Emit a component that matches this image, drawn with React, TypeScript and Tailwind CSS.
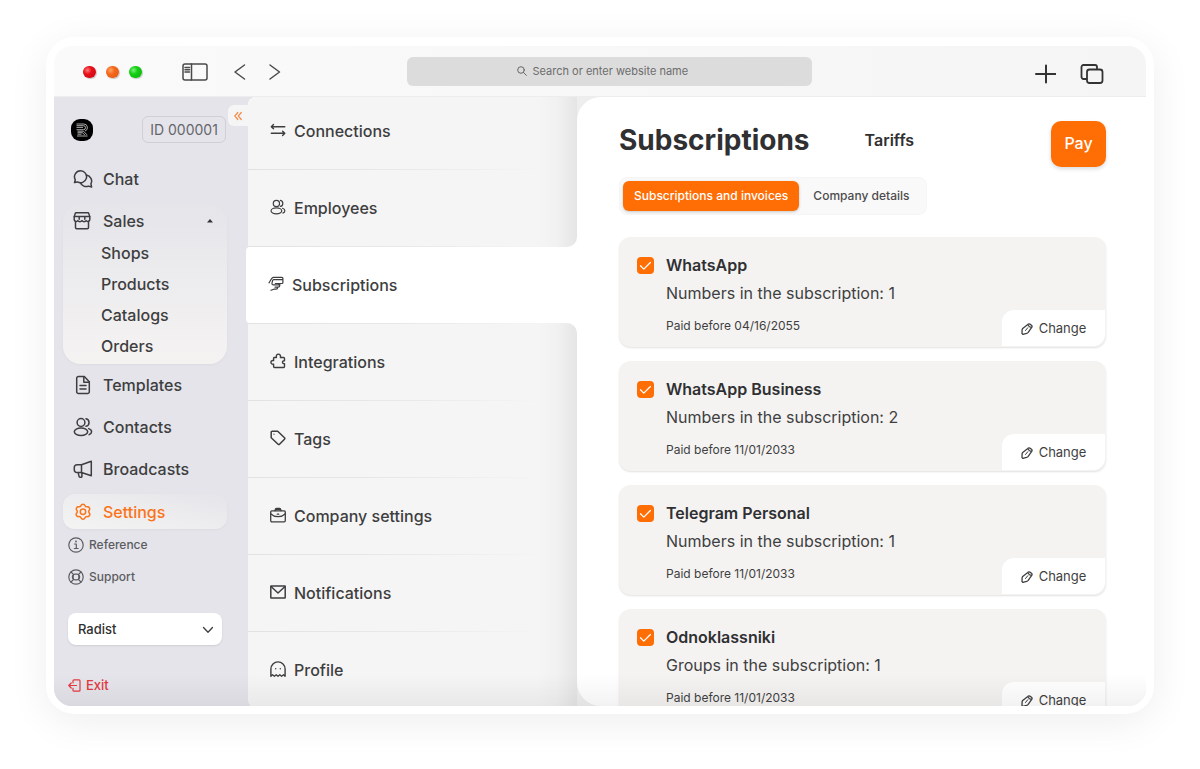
import type { ReactNode } from "react";

function Svg({ children, className, box = "0 0 20 20", w = "1.5" }: { children: ReactNode; className: string; box?: string; w?: string }) {
  return (
    <svg
      viewBox={box}
      className={className}
      fill="none"
      stroke="currentColor"
      strokeWidth={w}
      strokeLinecap="round"
      strokeLinejoin="round"
      aria-hidden="true"
    >
      {children}
    </svg>
  );
}

const ICON = "h-5 w-5 shrink-0";
const SMALL = "h-4 w-4 shrink-0 mb-0.5";

const Chat = () => (
  <Svg className={ICON}>
    <path d="M7.5 1.8a6 6 0 0 0-5.200 9L1.500 13.600l2.900-.7a6 6 0 1 0 3.100-11.100Z" />
    <path d="M7.500 13.900a6 6 0 0 0 7.900 3.200l3.200.9-.7-3.100a6 6 0 0 0-4.500-8.800" />
  </Svg>
);
const Store = () => (
  <Svg className={ICON} w="1.5">
    <path d="M3.200 1.800h11.600a1 1 0 0 1 1 .8l1 3.200v2.600a2 2 0 0 1-3.600 1.200 2.600 2.600 0 0 1-4.200 0 2.600 2.600 0 0 1-4.200 0A2 2 0 0 1 1.200 8.400V5.800l1-3.200a1 1 0 0 1 1-.8Z" />
    <path d="M1.300 5.600h15.400M6.200 5.800v2.500M11.800 5.800v2.500M2.500 10.500v6a1.200 1.200 0 0 0 1.200 1.200h10.600a1.200 1.200 0 0 0 1.200-1.200v-6" />
  </Svg>
);
const Doc = () => (
  <Svg className={ICON}>
    <path d="M5.500 1.500h5.800l5 5.200v10a1.800 1.800 0 0 1-1.800 1.800h-9a1.800 1.800 0 0 1-1.800-1.800V3.300a1.800 1.800 0 0 1 1.800-1.800Z" />
    <path d="M10.800 1.800v5.400H16M7 10.500h6M7 14h6" />
  </Svg>
);
const People = ({ className }: { className: string }) => (
  <Svg className={className} w="1.5">
    <circle cx="8" cy="5.500" r="3.900" />
    <ellipse cx="8" cy="14.800" rx="6.700" ry="3.700" />
    <path d="M13 1.700a3.900 3.900 0 0 1 0 7.600M15.700 11.600c1.800.6 2.900 1.700 2.900 3.100 0 1.300-1 2.300-2.500 2.900" />
  </Svg>
);
const Horn = () => (
  <Svg className={ICON}>
    <path d="M8.500 5.800 18.300 2.200v14.600L8.500 13.500H4a2.700 2.700 0 0 1-2.700-2.700V8.500A2.700 2.700 0 0 1 4 5.800h4.500ZM8.500 5.800v7.700M5.200 13.700l.9 3.900a.8.800 0 0 0 .8.600h1.200a.8.800 0 0 0 .8-.8v-3.600" />
  </Svg>
);
const Gear = () => (
  <Svg className={ICON}>
    <path d="M8.100 2.700c.6-1.600 3.200-1.600 3.800 0 .4 1 1.400 1.600 2.500 1.400 1.700-.3 3 1.900 1.900 3.300-.7.900-.7 2 0 2.900 1.300 1.500 0 3.900-1.900 3.600-1.100-.2-2.100.4-2.500 1.400-.6 1.700-3.200 1.700-3.800 0-.4-1-1.400-1.600-2.500-1.400-1.900.3-3.200-2.100-1.900-3.600.7-.9.700-2 0-2.900-1.100-1.400.2-3.600 1.900-3.300 1.100.2 2.100-.4 2.500-1.400Z" transform="translate(0 .7)" />
    <circle cx="10" cy="9.800" r="2.700" />
  </Svg>
);
const Info = () => (
  <Svg className="h-4 w-4 shrink-0" box="0 0 16 16" w="1.200">
    <circle cx="8" cy="8" r="7.200" />
    <path d="M6.500 7h1.800v4.500M6.300 11.500h3.800" />
    <circle cx="8" cy="4.500" r=".9" fill="currentColor" stroke="none" />
  </Svg>
);
const Buoy = () => (
  <Svg className="h-4 w-4 shrink-0" box="0 0 16 16" w="1.200">
    <circle cx="8" cy="8" r="7.200" />
    <rect x="5.200" y="5.200" width="5.600" height="5.600" rx="1.800" />
    <path d="m3 3 2.700 2.700M13 3l-2.700 2.700M3 13l2.700-2.700M13 13l-2.700-2.700M5.400 5.800C4 7 4 9 5.400 10.200M10.600 5.800C12 7 12 9 10.600 10.200" />
  </Svg>
);
const Exit = () => (
  <Svg className="h-[13px] w-[13px] shrink-0" box="0 0 13 13" w="1.200">
    <path d="M5 3.800V1.800a1 1 0 0 1 1-1h5a1 1 0 0 1 1 1v9.400a1 1 0 0 1-1 1H6a1 1 0 0 1-1-1V9.300M8.500 6.500H.8M3.200 4 .8 6.500 3.200 9" />
  </Svg>
);
const Arrows = () => (
  <Svg className={SMALL} box="0 0 16 16" w="1.400">
    <path d="M14.800 4.800H1.500M3.500 2.600 1.300 4.800l2.200 2M1.300 11.300h13.300M12.600 9.300l2.200 2-2.200 2.200" />
  </Svg>
);
const CardHand = () => (
  <Svg className={SMALL} box="0 0 16 16" w="1.200">
    <path d="M1 6.800C2.200 5 3 3.200 4 2.100c.5-.6 1-.8 1.700-.8h8.200a1 1 0 0 1 1 1v4.200a1 1 0 0 1-1 1H9M5.500 3.700h9.200M4.700 4.200 4 7.200c-.2 1 .4 1.700 1.300 1.700h4.900c1 0 1-1.400 0-1.400H7.300M11.800 7.700v1.700c0 1.100-.8 1.700-1.900 1.700H7M9.700 11.300c0 1.200-.7 1.900-1.700 1.900H5.800L3 14.300" />
  </Svg>
);
const Puzzle = () => (
  <Svg className={SMALL} box="0 0 16 16" w="1.400">
    <path d="M4 4.500h2.400c-.5-1.600.4-3.400 2-3.400s2.500 1.800 2 3.400h3.200a.9.900 0 0 1 .9.900v2.400c-2.600-.5-2.800 3.200 0 2.800v3a.9.900 0 0 1-.9.900H4.500a.9.900 0 0 1-.9-.9v-2.400C-.1 11.600.2 6.800 3.600 7.600V4.900Z" />
  </Svg>
);
const Tag = () => (
  <Svg className={SMALL} box="0 0 16 16" w="1.500">
    <path d="M1.200 2.300a1 1 0 0 1 1-1h5.500l6.800 6.500a1 1 0 0 1 0 1.400l-5 5a1 1 0 0 1-1.400 0L1.200 7.700V2.300Z" />
    <circle cx="4" cy="4.200" r=".6" fill="currentColor" stroke="none" />
  </Svg>
);
const Briefcase = () => (
  <Svg className={SMALL} box="0 0 16 16" w="1.300">
    <rect x=".7" y="3.800" width="14.600" height="11" rx="1.200" />
    <path d="M5 3.600c.2-1.500.6-2.300 1.400-2.300h3.200c.8 0 1.200.8 1.400 2.300M5.200 2.600h5.600M1 7c1.500 1.500 4 2.700 7 2.700S13.500 8.500 15 7M7.300 7.200h1.400" />
  </Svg>
);
const Mail = () => (
  <Svg className={SMALL} box="0 0 16 16" w="1.500">
    <rect x=".8" y="2" width="14.400" height="12" rx=".5" />
    <path d="M1 2.500 8 9l7-6.500" />
  </Svg>
);
const Ghost = () => (
  <Svg className={SMALL} box="0 0 16 16" w="1.400">
    <path d="M.9 15.200V8a7.100 7.100 0 0 1 14.200 0v7.200l-1.600-1.400-1.900 1.400-1.800-1.400L8 15.200l-1.800-1.400-1.800 1.400-1.900-1.400-1.600 1.400Z" />
    <path d="M5.700 7.600v.2M10.300 7.600v.2" />
  </Svg>
);
const Pencil = () => (
  <Svg className="h-3 w-3 shrink-0" box="0 0 12 12" w="1.300">
    <path d="M6.800 1.500a1.600 1.600 0 0 1 2-.4l1.700 1.200a1.600 1.600 0 0 1 .2 2.100L7.200 9.300a3.500 3.500 0 0 1-1.600 1.100l-3.700 1-.9-.8.100-3.500c0-.6.200-1.100.6-1.600L6.800 1.500ZM6.800 1.700c1 1.800 2.200 2.600 3.700 2.800" />
    <path d="m4.500 7.500 2.300-2.800" strokeWidth="1" />
  </Svg>
);

function SideLink({ icon, label }: { icon: ReactNode; label: string }) {
  return (
    <a href="#" className="flex h-[42px] items-center gap-2.5 px-2.5">
      {icon}
      {label}
    </a>
  );
}

function Sidebar() {
  return (
    <aside className="relative flex w-[194px] shrink-0 flex-col bg-[#e4e4ea] px-[9px] pt-[19px] text-base leading-5 font-medium text-[#3e3e40]">
      <div className="mb-[15px] flex h-[27px] shrink-0 items-center justify-between pr-[13px] pl-2">
        <svg viewBox="0 0 22 22" className="h-[22px] w-[22px]" role="img" aria-label="Radist">
          <rect width="22" height="22" rx="9" fill="#000" />
          <g fill="none" stroke="#d4d4d4" strokeWidth=".8">
            <path d="M5.500 5h7.300a3.600 3.600 0 0 1 1.200 7M5.500 6.700h7a2 2 0 0 1 0 4H5.500M5.500 8.400h6.500M6.500 12.200h6l3.500 3.600M6.500 13.700h5l2.300 2.300M6.500 15.200h4M6 17h10.500" />
          </g>
        </svg>
        <span className="flex h-[27px] w-[84px] items-center justify-center rounded-md border border-[#cfcfd5] text-sm font-normal text-[#66666a]">ID 000001</span>
      </div>
      <button type="button" aria-label="Collapse menu" className="absolute top-2 right-0 flex h-[21px] w-5 items-center justify-center rounded-l-md bg-[#f5f5f5] text-[#f58a45]">
        <Svg className="h-2.5 w-2.5" box="0 0 10 10" w="1.200">
          <path d="M4.800 1.500 1.800 5l3 3.500M8.300 1.500l-3 3.500 3 3.500" />
        </Svg>
      </button>
      <nav aria-label="Main">
        <SideLink icon={<Chat />} label="Chat" />
        <div className="mt-1 mr-3 rounded-[18px] bg-gradient-to-b from-[#e5e5ea] to-[#f5f3f2] shadow-[0_1px_3px_rgba(0,0,0,0.04)]">
          <button type="button" aria-expanded="true" className="flex h-[34px] w-full items-center gap-2.5 pr-3.5 pl-2.5">
            <Store />
            Sales
            <svg viewBox="0 0 6 4" className="ml-auto h-1 w-1.5" aria-hidden="true">
              <path d="M0 3.600 3 0l3 3.600Z" fill="#333" />
            </svg>
          </button>
          <div className="grid h-[126px] grid-rows-4 pb-[3px] pl-[38px]">
            <a href="#" className="flex items-center">Shops</a>
            <a href="#" className="flex items-center">Products</a>
            <a href="#" className="flex items-center">Catalogs</a>
            <a href="#" className="flex items-center">Orders</a>
          </div>
        </div>
        <SideLink icon={<Doc />} label="Templates" />
        <SideLink icon={<People className={ICON} />} label="Contacts" />
        <SideLink icon={<Horn />} label="Broadcasts" />
        <a href="#" aria-current="page" className="mt-1 mr-3 flex h-[35px] items-center gap-2.5 rounded-xl bg-gradient-to-tr from-[#f5f4f3] to-[#e5e5ea] px-2.5 text-[#fa7419] shadow-[0_1px_3px_rgba(0,0,0,0.04)]">
          <Gear />
          Settings
        </a>
      </nav>
      <div className="flex flex-col pl-[5px] text-xs text-[#5c5c60]">
        <a href="#" className="flex h-8 items-center gap-[5px]"><Info />Reference</a>
        <a href="#" className="flex h-8 items-center gap-[5px]"><Buoy />Support</a>
      </div>
      <div className="relative mt-5 mr-[17px] ml-[5px]">
        <select aria-label="Company" className="h-8 w-full appearance-none rounded-lg bg-white px-2.5 text-[13px] text-[#303030] shadow-[0_1px_2px_rgba(0,0,0,0.1)]">
          <option>Radist</option>
        </select>
        <Svg className="pointer-events-none absolute top-3 right-2 h-2.5 w-3" box="0 0 12 10" w="1.300">
          <path d="m1.500 2.500 4.500 4.800 4.500-4.800" />
        </Svg>
      </div>
      <a href="#" className="mt-[30px] ml-[5px] flex items-center gap-[5px] self-start text-[13px] text-[#e5383f]"><Exit />Exit</a>
    </aside>
  );
}

const Rule = () => <div className="h-px shrink-0 bg-gradient-to-r from-[#e2e2e2] via-[#e9e9e9] to-transparent to-90%" />;

function MenuItem({ icon, label, className = "h-[76px]" }: { icon: ReactNode; label: string; className?: string }) {
  return (
    <a href="#" className={"flex shrink-0 items-center gap-2 pl-[22px] " + className}>
      {icon}
      {label}
    </a>
  );
}

const SHADE = "bg-gradient-to-r from-[#f5f5f5] from-88% via-[#f1f1f1] via-94% to-[#e5e5e5]";

function SettingsMenu() {
  return (
    <nav aria-label="Settings" className="flex w-[329px] shrink-0 flex-col rounded-l-lg bg-white text-base leading-5 font-medium text-[#3e3e40]">
      <div className={"flex shrink-0 flex-col rounded-tl-lg rounded-br-[10px] " + SHADE}>
        <MenuItem icon={<Arrows />} label="Connections" className="h-[72px] pb-1" />
        <Rule />
        <MenuItem icon={<People className={SMALL} />} label="Employees" />
        <Rule />
      </div>
      <MenuItem icon={<CardHand />} label="Subscriptions" className="relative -ml-0.5 h-[76px] rounded-l-sm bg-white" />
      <div className={"flex grow flex-col rounded-tr-[10px] rounded-bl-lg " + SHADE}>
        <Rule />
        <MenuItem icon={<Puzzle />} label="Integrations" />
        <Rule />
        <MenuItem icon={<Tag />} label="Tags" />
        <Rule />
        <MenuItem icon={<Briefcase />} label="Company settings" />
        <Rule />
        <MenuItem icon={<Mail />} label="Notifications" />
        <Rule />
        <MenuItem icon={<Ghost />} label="Profile" />
      </div>
    </nav>
  );
}

const SUBSCRIPTIONS = [
  { name: "WhatsApp", detail: "Numbers in the subscription: 1", paid: "04/16/2055" },
  { name: "WhatsApp Business", detail: "Numbers in the subscription: 2", paid: "11/01/2033" },
  { name: "Telegram Personal", detail: "Numbers in the subscription: 1", paid: "11/01/2033" },
  { name: "Odnoklassniki", detail: "Groups in the subscription: 1", paid: "11/01/2033" },
];

function SubscriptionCard({ name, detail, paid }: { name: string; detail: string; paid: string }) {
  return (
    <li className="relative h-[110px] shrink-0 rounded-xl bg-[#f4f3f2] px-[18px] pt-[18px] text-[#3f3f41] shadow-[0_1px_2px_rgba(0,0,0,0.12)]">
      <label className="flex h-5 items-center gap-3 text-base leading-5 font-semibold text-[#303032]">
        <span className="relative flex h-[17px] w-[17px]">
          <input type="checkbox" defaultChecked className="peer h-[17px] w-[17px] appearance-none rounded-[4px] bg-[#d0d0d0] checked:bg-[#ff6d05]" />
          <Svg className="pointer-events-none absolute inset-0 hidden text-white peer-checked:block" box="0 0 17 17" w="1.300">
            <path d="m3.500 8.800 3.300 3.300 6.600-6.600" />
          </Svg>
        </span>
        {name}
      </label>
      <p className="mt-2 pl-[29px] text-base leading-5">{detail}</p>
      <p className="mt-[13px] pl-[29px] text-xs leading-5">Paid before {paid}</p>
      <button type="button" className="absolute right-px bottom-px flex h-9 w-[103px] items-center justify-center gap-1.5 rounded-tl-xl rounded-br-xl bg-white pt-px text-[13px] text-[#3f3f41]">
        <Pencil />
        Change
      </button>
    </li>
  );
}

function BrowserBar() {
  return (
    <header className="flex h-[51px] shrink-0 items-center border-b border-[#ededed] bg-gradient-to-r from-[#fafafa] to-[#f5f5f5] text-[#4a4a4a]">
      <div className="flex w-[353px] items-center pt-0.5 pl-[29px]">
        <div className="flex items-center gap-2.5">
          <span className="h-3 w-[13px] rounded-full bg-[radial-gradient(circle_at_35%_35%,#ff7a7a,#e6101a_35%,#c90812)] shadow-[1px_1px_1px_rgba(0,0,0,0.2)]" />
          <span className="h-3 w-[13px] rounded-full bg-[radial-gradient(circle_at_35%_35%,#ffa566,#f4691c_35%,#e0560c)] shadow-[1px_1px_1px_rgba(0,0,0,0.2)]" />
          <span className="h-3 w-[13px] rounded-full bg-[radial-gradient(circle_at_35%_35%,#7df07d,#14cf14_35%,#0cae0c)] shadow-[1px_1px_1px_rgba(0,0,0,0.2)]" />
        </div>
        <button type="button" aria-label="Toggle sidebar" className="ml-10">
          <Svg className="h-[18px] w-[26px]" box="0 0 26 18" w="1.500">
            <rect x="1" y="1" width="24" height="16" rx="2" />
            <path d="M9.500 1v16" />
            <path d="M3 4.500h4.500M3 6.700h4.500M3 8.900h4.500" />
          </Svg>
        </button>
        <button type="button" aria-label="Back" className="ml-[25px]">
          <Svg className="h-[18px] w-[14px]" box="0 0 14 18"><path d="M11.500 2 2 9l9.500 7" /></Svg>
        </button>
        <button type="button" aria-label="Forward" className="ml-[21px]">
          <Svg className="h-[18px] w-[14px]" box="0 0 14 18"><path d="m2 2 9.500 7L2 16" /></Svg>
        </button>
      </div>
      <label className="flex h-[29px] min-w-0 grow items-center justify-center gap-1.5 rounded-md bg-[#dcdcdc] pr-2 text-[#666]">
        <Svg className="h-2.5 w-2.5 shrink-0" box="0 0 10 10" w="1">
          <circle cx="4" cy="4" r="3.300" />
          <path d="m6.500 6.500 2.900 2.900" />
        </Svg>
        <input aria-label="Address" placeholder="Search or enter website name" className="w-[162px] min-w-0 bg-transparent text-[11px] placeholder:text-[#6c6c6c] focus:outline-none" />
      </label>
      <div className="flex w-[334px] items-center justify-end gap-6 pt-1.5 pr-[42px] text-[#333]">
        <button type="button" aria-label="New tab">
          <Svg className="h-[22px] w-[22px]" box="0 0 22 22" w="2"><path d="M12 2.500v17M2 11h20" /></Svg>
        </button>
        <button type="button" aria-label="Show tabs">
          <Svg className="h-[22px] w-6" box="0 0 24 22" w="1.800">
            <rect x="7" y="6.500" width="15.500" height="13.500" rx="2.500" />
            <path d="M6.500 16H3.500a2 2 0 0 1-2-2V4a2 2 0 0 1 2-2H15a2 2 0 0 1 2 2v2" />
          </Svg>
        </button>
      </div>
    </header>
  );
}

export default function App() {
  return (
    <div className="h-screen bg-white px-[46px] pt-[37px] pb-[55px] font-['Inter',sans-serif] antialiased">
      <div className="h-full rounded-[28px] bg-white p-2 pt-[9px] shadow-[0_8px_40px_rgba(0,0,0,0.07)]">
        <div className="relative flex h-full flex-col overflow-hidden rounded-[18px]">
          <BrowserBar />
          <div className="flex min-h-0 grow bg-[#e4e4ea]">
            <Sidebar />
            <div className="flex min-w-0 grow rounded-l-lg bg-[#eeeeee]">
              <SettingsMenu />
              <main className="flex min-w-0 grow flex-col rounded-l-[24px] bg-white pt-6 pr-10 pl-[42px]">
                <div className="flex h-[46px] shrink-0 items-center">
                  <h1 className="pb-2 text-[28px] leading-9 font-bold text-[#303032]">Subscriptions</h1>
                  <a href="#" className="ml-[55px] pb-2 text-base font-semibold text-[#303032]">Tariffs</a>
                  <button type="button" className="ml-auto h-[46px] w-[55px] rounded-[10px] bg-[#ff6d05] pb-0.5 text-base font-medium text-white shadow-[0_2px_4px_rgba(0,0,0,0.15)]">Pay</button>
                </div>
                <div role="tablist" className="mt-[10px] flex h-[38px] shrink-0 self-start rounded-lg border border-[#f5f5f5] bg-[#f9f9f9] p-[3px] text-xs font-medium">
                  <button type="button" role="tab" aria-selected="true" className="rounded-md bg-[#ff6d05] px-[11px] text-white shadow-[0_1px_3px_rgba(0,0,0,0.2)]">Subscriptions and invoices</button>
                  <button type="button" role="tab" aria-selected="false" className="px-3.5 text-[#4c4c4e]">Company details</button>
                </div>
                <ul className="mt-[22px] flex flex-col gap-3.5">
                  {SUBSCRIPTIONS.map((s) => (
                    <SubscriptionCard key={s.name} name={s.name} detail={s.detail} paid={s.paid} />
                  ))}
                </ul>
              </main>
            </div>
          </div>
          <div className="pointer-events-none absolute inset-x-0 bottom-0 h-8 bg-gradient-to-b from-transparent to-black/5" />
        </div>
      </div>
    </div>
  );
}
